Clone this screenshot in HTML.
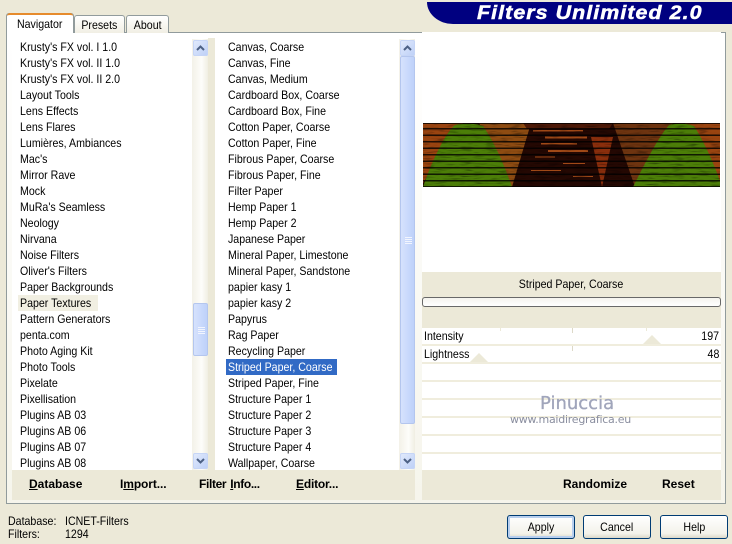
<!DOCTYPE html>
<html><head><meta charset="utf-8"><style>
html,body{margin:0;padding:0}
body{width:732px;height:544px;overflow:hidden;position:relative;background:#ece9d8;font:12px/16px "Liberation Sans",sans-serif;color:#000}
div,span{position:absolute;white-space:nowrap}
.l{left:0;right:0}
.r{height:16px;line-height:16px;transform:scaleX(.885);transform-origin:0 50%}
.t{transform:scaleX(.885);transform-origin:0 50%}
.n{transform:scaleX(.885);transform-origin:100% 50%}
.i{position:static;display:inline-block;transform:scaleX(.885)}
.b{font-weight:bold}
.u{position:static;text-decoration:underline}
.sb{width:16px;top:39px;height:431px;background:linear-gradient(90deg,#f3f1e8,#fdfdfa 60%,#f0eee2)}
.btn{width:15px;height:16px;border-radius:2px;background:linear-gradient(135deg,#e3ebfc,#bccff7);box-shadow:inset 0 0 0 1px #c6d5f6;left:1px}
.btn svg{position:absolute;left:3px;top:4px}
.th{left:1px;width:13px;border:1px solid #b4c6ee;border-radius:2px;background:linear-gradient(90deg,#d6e2fd,#bed1fa)}
.gr{left:4px;width:7px;height:1px;background:#f2f5fe}
.pb{width:66px;height:22px;border:1px solid #003c74;border-radius:3px;background:linear-gradient(#fff,#f3f2ea 80%,#dcd8c8);text-align:center;line-height:22px;top:515px}
.row{left:422px;width:299px;height:16px;background:#fff}
.tab{border:1px solid #919b9c;border-bottom:0;border-radius:3px 3px 0 0;background:linear-gradient(#fff,#f1efe4);text-align:center}
</style></head><body>

<div style="left:427px;top:2px;width:305px;height:22px;background:#000080;border-radius:0 0 0 26px/0 0 0 22px"></div>
<div style="left:477px;top:2px;height:22px;line-height:23px;font-size:19px;font-weight:bold;font-style:italic;color:#fff;letter-spacing:.95px;transform:scaleX(1.125);transform-origin:0 50%;-webkit-text-stroke:.5px #fff">Filters Unlimited 2.0</div>

<div style="left:6px;top:32px;width:718px;height:470px;border:1px solid #919b9c;background:linear-gradient(#fff,#f6f5ec)"></div>

<div class="tab" style="left:74px;top:15px;width:49px;height:17px;line-height:19px"><span class="i">Presets</span></div>
<div class="tab" style="left:126px;top:15px;width:41px;height:17px;line-height:19px"><span class="i">About</span></div>
<div style="left:7px;top:13px;width:66px;height:20px;background:#fff;border-radius:3px 3px 0 0;border-top:2px solid #e68b2c;box-sizing:border-box;text-align:center;line-height:19px;box-shadow:-1px 0 0 #919b9c,1px 0 0 #919b9c"><span class="i">Navigator</span></div>

<div style="left:208px;top:38px;width:7px;height:432px;background:#ece9d8"></div>
<div style="left:12px;top:470px;width:403px;height:30px;background:#ece9d8"></div>
<div style="left:415px;top:38px;width:7px;height:462px;background:linear-gradient(#fff,#f6f5ec)"></div>

<!-- list 1 -->
<div style="left:12px;top:39px;width:180px;height:431px;overflow:hidden;background:#fff">
<div style="left:6px;top:256px;width:80px;height:16px;background:#f1efe2"></div>
<div class="l" style="top:0;left:8px">
<div class="r" style="top:0">Krusty's FX vol. I 1.0</div>
<div class="r" style="top:16px">Krusty's FX vol. II 1.0</div>
<div class="r" style="top:32px">Krusty's FX vol. II 2.0</div>
<div class="r" style="top:48px">Layout Tools</div>
<div class="r" style="top:64px">Lens Effects</div>
<div class="r" style="top:80px">Lens Flares</div>
<div class="r" style="top:96px">Lumières, Ambiances</div>
<div class="r" style="top:112px">Mac's</div>
<div class="r" style="top:128px">Mirror Rave</div>
<div class="r" style="top:144px">Mock</div>
<div class="r" style="top:160px">MuRa's Seamless</div>
<div class="r" style="top:176px">Neology</div>
<div class="r" style="top:192px">Nirvana</div>
<div class="r" style="top:208px">Noise Filters</div>
<div class="r" style="top:224px">Oliver's Filters</div>
<div class="r" style="top:240px">Paper Backgrounds</div>
<div class="r" style="top:256px">Paper Textures</div>
<div class="r" style="top:272px">Pattern Generators</div>
<div class="r" style="top:288px">penta.com</div>
<div class="r" style="top:304px">Photo Aging Kit</div>
<div class="r" style="top:320px">Photo Tools</div>
<div class="r" style="top:336px">Pixelate</div>
<div class="r" style="top:352px">Pixellisation</div>
<div class="r" style="top:368px">Plugins AB 03</div>
<div class="r" style="top:384px">Plugins AB 06</div>
<div class="r" style="top:400px">Plugins AB 07</div>
<div class="r" style="top:416px">Plugins AB 08</div>
</div></div>
<div class="sb" style="left:192px">
<div class="btn" style="top:1px"><svg width="9" height="8"><path d="M1 6L4.5 2.5L8 6" fill="none" stroke="#4d6185" stroke-width="2"/></svg></div>
<div class="th" style="top:264px;height:51px"><div class="gr" style="top:23px"></div><div class="gr" style="top:25px"></div><div class="gr" style="top:27px"></div><div class="gr" style="top:29px"></div></div>
<div class="btn" style="top:414px"><svg width="9" height="8"><path d="M1 2L4.5 5.5L8 2" fill="none" stroke="#4d6185" stroke-width="2"/></svg></div>
</div>

<!-- list 2 -->
<div style="left:215px;top:39px;width:184px;height:431px;overflow:hidden;background:#fff">
<div style="left:11px;top:320px;width:111px;height:16px;background:#316ac5"></div>
<div class="l" style="top:0;left:13px">
<div class="r" style="top:0">Canvas, Coarse</div>
<div class="r" style="top:16px">Canvas, Fine</div>
<div class="r" style="top:32px">Canvas, Medium</div>
<div class="r" style="top:48px">Cardboard Box, Coarse</div>
<div class="r" style="top:64px">Cardboard Box, Fine</div>
<div class="r" style="top:80px">Cotton Paper, Coarse</div>
<div class="r" style="top:96px">Cotton Paper, Fine</div>
<div class="r" style="top:112px">Fibrous Paper, Coarse</div>
<div class="r" style="top:128px">Fibrous Paper, Fine</div>
<div class="r" style="top:144px">Filter Paper</div>
<div class="r" style="top:160px">Hemp Paper 1</div>
<div class="r" style="top:176px">Hemp Paper 2</div>
<div class="r" style="top:192px">Japanese Paper</div>
<div class="r" style="top:208px">Mineral Paper, Limestone</div>
<div class="r" style="top:224px">Mineral Paper, Sandstone</div>
<div class="r" style="top:240px">papier kasy 1</div>
<div class="r" style="top:256px">papier kasy 2</div>
<div class="r" style="top:272px">Papyrus</div>
<div class="r" style="top:288px">Rag Paper</div>
<div class="r" style="top:304px">Recycling Paper</div>
<div class="r" style="top:320px;color:#fff">Striped Paper, Coarse</div>
<div class="r" style="top:336px">Striped Paper, Fine</div>
<div class="r" style="top:352px">Structure Paper 1</div>
<div class="r" style="top:368px">Structure Paper 2</div>
<div class="r" style="top:384px">Structure Paper 3</div>
<div class="r" style="top:400px">Structure Paper 4</div>
<div class="r" style="top:416px">Wallpaper, Coarse</div>
</div></div>
<div class="sb" style="left:399px">
<div class="btn" style="top:1px"><svg width="9" height="8"><path d="M1 6L4.5 2.5L8 6" fill="none" stroke="#4d6185" stroke-width="2"/></svg></div>
<div class="th" style="top:17px;height:366px"><div class="gr" style="top:180px"></div><div class="gr" style="top:182px"></div><div class="gr" style="top:184px"></div><div class="gr" style="top:186px"></div></div>
<div class="btn" style="top:414px"><svg width="9" height="8"><path d="M1 2L4.5 5.5L8 2" fill="none" stroke="#4d6185" stroke-width="2"/></svg></div>
</div>

<div class="b" style="left:29px;top:476px"><span class="u">D</span>atabase</div>
<div class="b" style="left:120px;top:476px;letter-spacing:-.1px">I<span class="u">m</span>port...</div>
<div class="b" style="left:199px;top:476px;word-spacing:1px;letter-spacing:-.35px">Filter <span class="u">I</span>nfo...</div>
<div class="b" style="left:296px;top:476px;letter-spacing:-.2px"><span class="u">E</span>ditor...</div>

<!-- right -->
<div style="left:422px;top:32px;width:299px;height:240px;background:#fff"></div>
<svg style="position:absolute;left:423px;top:123px" width="297" height="64" viewBox="0 0 297 64">
<defs>
<filter id="n" x="0" y="0" width="100%" height="100%"><feTurbulence type="fractalNoise" baseFrequency="0.08 0.7" numOctaves="2" seed="4"/><feColorMatrix values="0 0 0 0 0 0 0 0 0 0 0 0 0 0 0 0 0 0 3 -1.5"/></filter>
</defs>
<rect width="297" height="64" fill="#240803"/>
<path d="M0 0H40L0 60Z" fill="#9a4410"/>
<path d="M56 0H108L89 64Z" fill="#8e4c12"/>
<path d="M168 14H190L179 64Z" fill="#8a2e0c"/>
<path d="M190 0H250L212 64Z" fill="#6e3410"/>
<path d="M262 0H297V60Z" fill="#9a4410"/>
<path d="M100 0H190L186 6H104Z" fill="#4e1a08"/>
<g fill="#c05a1c" opacity=".8">
<rect x="110" y="7" width="50" height="1.5"/><rect x="122" y="13.5" width="42" height="2"/><rect x="118" y="20" width="36" height="1.5"/><rect x="125" y="27" width="40" height="2"/><rect x="112" y="33.5" width="20" height="1"/><rect x="140" y="40" width="22" height="1"/><rect x="108" y="47" width="30" height="1"/><rect x="150" y="53" width="20" height="1"/>
</g>
<path d="M0 64C8 40 22 10 32 2C40 0 52 0 60 3C72 20 82 44 89 64Z" fill="#4c7e08"/>
<path d="M210 64C220 44 234 16 246 2C254 0 264 0 271 3C282 20 292 44 297 58V64Z" fill="#4c7e08"/>
<rect width="297" height="64" filter="url(#n)" opacity=".35"/>
<g fill="#000" opacity=".78">
<rect y="0" width="297" height="1"/><rect y="5" width="297" height="1.5"/><rect y="11.5" width="297" height="1.5"/><rect y="18" width="297" height="1.5"/><rect y="24.5" width="297" height="1.5"/><rect y="31" width="297" height="1.5"/><rect y="37.5" width="297" height="1.5"/><rect y="44" width="297" height="1.5"/><rect y="50.5" width="297" height="1.5"/><rect y="57" width="297" height="1.5"/><rect y="63" width="297" height="1"/>
</g>
</svg>

<div style="left:422px;top:272px;width:299px;height:56px;background:#ece9d8"></div>
<div style="left:422px;top:276px;width:299px;text-align:center"><span class="i">Striped Paper, Coarse</span></div>
<div style="left:422px;top:297px;width:297px;height:8px;border:1px solid #686868;border-radius:3px;background:linear-gradient(#f4f3ee,#fff)"></div>

<div style="left:422px;top:328px;width:299px;height:142px;background:#f0eddd"></div>
<div class="row" style="top:328px"></div>
<div class="row" style="top:346px"></div>
<div class="row" style="top:364px"></div>
<div class="row" style="top:382px"></div>
<div class="row" style="top:400px"></div>
<div class="row" style="top:418px"></div>
<div class="row" style="top:436px"></div>
<div class="row" style="top:454px"></div>

<div style="left:500px;top:328px;width:1px;height:3px;background:#ece9d8"></div>
<div style="left:572px;top:328px;width:1px;height:5px;background:#ddd9c8"></div>
<div style="left:646px;top:328px;width:1px;height:3px;background:#ece9d8"></div>
<div style="left:572px;top:346px;width:1px;height:5px;background:#ddd9c8"></div>
<svg style="position:absolute;left:643px;top:335px" width="20" height="9"><path d="M0 9L9 0L18 9Z" fill="#ece9d8"/></svg>
<svg style="position:absolute;left:470px;top:353px" width="20" height="9"><path d="M0 9L9 0L18 9Z" fill="#ece9d8"/></svg>
<div class="t" style="left:424px;top:328px">Intensity</div>
<div class="t" style="left:424px;top:346px">Lightness</div>
<div class="n" style="right:13px;top:328px">197</div>
<div class="n" style="right:13px;top:346px">48</div>

<div style="left:540px;top:393px;font:18px/22px 'DejaVu Sans',sans-serif;color:#a0a5bb;-webkit-text-stroke:.3px #a0a5bb">Pinuccia</div>
<div style="left:510px;top:413px;font:11px/14px 'DejaVu Sans',sans-serif;color:#8a8e9f;letter-spacing:-.25px">www.maidiregrafica.eu</div>

<div style="left:422px;top:470px;width:299px;height:30px;background:#ece9d8"></div>
<div class="b" style="left:563px;top:476px">Randomize</div>
<div class="b" style="left:662px;top:476px">Reset</div>

<div class="t" style="left:8px;top:513px">Database:</div>
<div class="t" style="left:65px;top:513px">ICNET-Filters</div>
<div class="t" style="left:8px;top:526px">Filters:</div>
<div class="t" style="left:65px;top:526px">1294</div>

<div class="pb" style="left:507px;box-shadow:inset 0 0 0 2px #b8cfee"><span class="i">Apply</span></div>
<div class="pb" style="left:583px"><span class="i">Cancel</span></div>
<div class="pb" style="left:660px"><span class="i">Help</span></div>
</body></html>
